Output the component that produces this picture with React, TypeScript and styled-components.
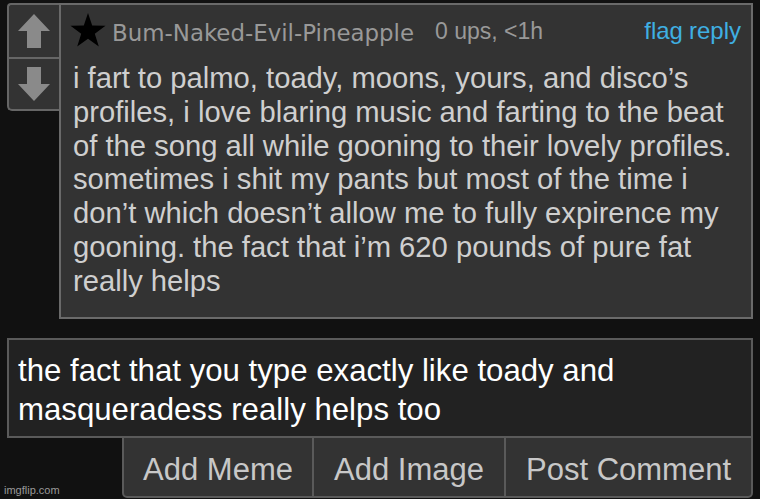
import styled, { createGlobalStyle } from "styled-components"

const Global = createGlobalStyle`
  html, body {
    margin: 0;
    padding: 0;
    background: #111111;
    font-family: "Liberation Sans", Arial, sans-serif;
  }
`

const Page = styled.div`
  width: 760px;
  height: 499px;
  overflow: hidden;
  position: relative;
  padding: 3px 7px 0 7px;
  box-sizing: border-box;
`

const Row = styled.div`
  display: flex;
  align-items: flex-start;
`

const Votes = styled.div`
  width: 52px;
  display: flex;
  flex-direction: column;
  background: #333;
  border: 2px solid #666;
  border-right: none;
  border-radius: 4px 0 0 5px;
  box-sizing: border-box;
`

const Vote = styled.div<{ $first?: boolean }>`
  height: 52px;
  display: flex;
  align-items: center;
  justify-content: center;
  border-top: ${(p) => (p.$first ? "none" : "2px solid #666")};
  box-sizing: border-box;
`

const Comment = styled.div`
  flex: 1;
  height: 316px;
  background: #333;
  border: 2px solid #6a6a6a;
  box-sizing: border-box;
  padding: 0 10px 0 9px;
`

const Head = styled.div`
  display: flex;
  align-items: center;
  height: 52px;
  color: #999;
`

const User = styled.span`
  font-family: "DejaVu Sans", sans-serif;
  font-size: 22.9px;
  margin-left: 6px;
  margin-top: 3px;
`

const Meta = styled.span`
  font-size: 23px;
  margin-left: 21px;
  margin-top: 0;
`

const Links = styled.div`
  margin-left: auto;
  display: flex;
  gap: 6px;
  margin-top: 0;
`

const Link = styled.a`
  color: #3fafe2;
  font-size: 24px;
  text-decoration: none;
`

const Body = styled.div`
  padding-left: 3px;
  color: #cfcfcf;
  font-size: 29.2px;
  line-height: 33.8px;
  margin-top: 5px;
`

const Line = styled.div`
  white-space: nowrap;
`

const Reply = styled.div`
  margin-top: 19px;
  height: 100px;
  background: #222;
  border: 2px solid #5a5a5a;
  box-sizing: border-box;
  padding: 11px 9px;
  color: #fff;
  font-size: 31.2px;
  line-height: 39px;
`

const Buttons = styled.div`
  display: flex;
  justify-content: flex-end;
  margin-top: -2px;
`

const Button = styled.button<{ $w: number; $last?: boolean; $first?: boolean }>`
  width: ${(p) => p.$w}px;
  height: 62px;
  background: #333;
  border: 2px solid #5a5a5a;
  border-left: ${(p) => (p.$first ? "2px solid #5a5a5a" : "none")};
  border-radius: ${(p) => (p.$first ? "0 0 0 5px" : p.$last ? "0 0 5px 0" : "0")};
  color: #c8c8c8;
  font-family: "Liberation Sans", Arial, sans-serif;
  font-size: 31px;
  padding: 6px 0 0;
  box-sizing: border-box;
`

const Mark = styled.div`
  position: absolute;
  left: 4px;
  bottom: 3px;
  color: #999;
  font-size: 11px;
`

const Arrow = ({ down }: { down?: boolean }) => (
  <svg width="34" height="36" viewBox="0 0 34 36" style={{ transform: down ? "rotate(180deg)" : undefined }}>
    <path d="M17 1 L33 18 L24 18 L24 35 L10 35 L10 18 L1 18 Z" fill="#8a8a8a" />
  </svg>
)

const Star = () => (
  <svg width="36" height="36" viewBox="0 0 36 36">
    <path
      d="M18 0 L22.2 12.6 L35.5 12.8 L24.8 20.7 L28.8 33.5 L18 25.8 L7.2 33.5 L11.2 20.7 L0.5 12.8 L13.8 12.6 Z"
      fill="#000"
    />
  </svg>
)

const lines = [
  "i fart to palmo, toady, moons, yours, and disco’s",
  "profiles, i love blaring music and farting to the beat",
  "of the song all while gooning to their lovely profiles.",
  "sometimes i shit my pants but most of the time i",
  "don’t which doesn’t allow me to fully expirence my",
  "gooning. the fact that i’m 620 pounds of pure fat",
  "really helps",
]

export default function App() {
  return (
    <Page>
      <Global />
      <Row>
        <Votes>
          <Vote $first>
            <Arrow />
          </Vote>
          <Vote>
            <Arrow down />
          </Vote>
        </Votes>
        <Comment>
          <Head>
            <Star />
            <User>Bum-Naked-Evil-Pineapple</User>
            <Meta>0 ups, &lt;1h</Meta>
            <Links>
              <Link>flag</Link>
              <Link>reply</Link>
            </Links>
          </Head>
          <Body>
            {lines.map((l, i) => (
              <Line key={i}>{l}</Line>
            ))}
          </Body>
        </Comment>
      </Row>
      <Reply>
        the fact that you type exactly like toady and
        <br />
        masqueradess really helps too
      </Reply>
      <Buttons>
        <Button $w={192} $first>Add Meme</Button>
        <Button $w={192}>Add Image</Button>
        <Button $w={247} $last>Post Comment</Button>
      </Buttons>
      <Mark>imgflip.com</Mark>
    </Page>
  )
}
